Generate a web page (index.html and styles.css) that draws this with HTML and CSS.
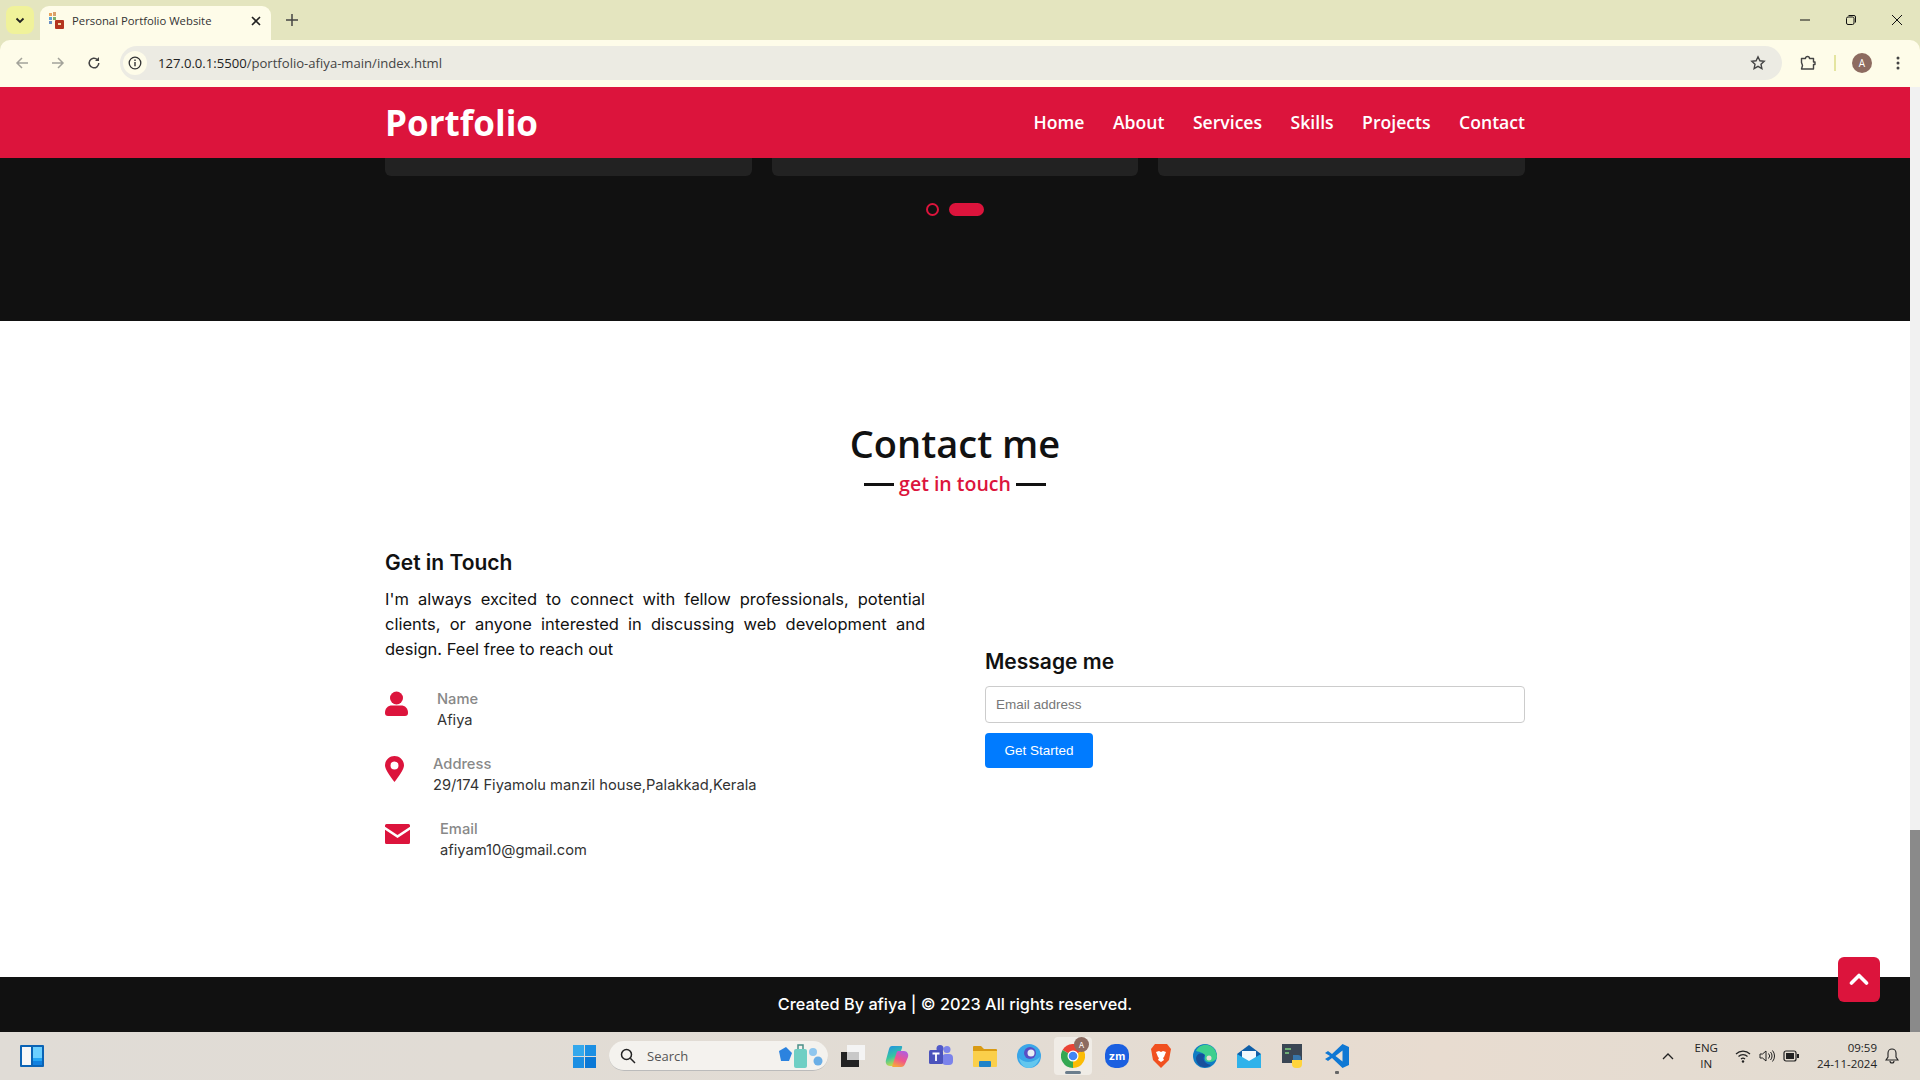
FILE: index.html
```html
<!DOCTYPE html>
<html lang="en">

<head>
    <meta charset="UTF-8">
    <meta name="viewport" content="width=device-width, initial-scale=1.0">
    <title>Personal Portfolio Website</title>
    <link rel="stylesheet" href="styles.css">
</head>

<body>
    <div class="screen">
        <!-- browser tabs -->
        <div class="tabstrip">
            <div class="tab-search">
                <svg width="12" height="12" viewBox="0 0 12 12"><path d="M2.5 4.5 6 8l3.5-3.5" fill="none" stroke="#222" stroke-width="1.8"/></svg>
            </div>
            <div class="tab">
                <svg class="favicon" width="15" height="17" viewBox="0 0 15 17">
                    <rect x="0" y="1" width="3" height="3" fill="#e8a15a"/>
                    <rect x="4" y="0" width="3" height="4" fill="#d9a06b"/>
                    <rect x="0" y="5" width="3" height="3" fill="#5aa0d8"/>
                    <rect x="4" y="5" width="3" height="3" fill="#7fb069"/>
                    <rect x="0" y="9" width="3" height="3" fill="#6a8fc4"/>
                    <rect x="6" y="8" width="9" height="9" rx="1" fill="#b5351f"/>
                    <rect x="9" y="11" width="3" height="2" fill="#f3d9a4"/>
                </svg>
                <span class="tab-title">Personal Portfolio Website</span>
                <svg class="tab-close" width="10" height="10" viewBox="0 0 10 10"><path d="M1 1l8 8M9 1l-8 8" stroke="#222" stroke-width="1.6"/></svg>
            </div>
            <svg class="tab-new" width="12" height="12" viewBox="0 0 12 12"><path d="M6 0v12M0 6h12" stroke="#444" stroke-width="1.5"/></svg>
            <div class="win-controls">
                <svg width="12" height="12" viewBox="0 0 12 12"><path d="M1 6h10" stroke="#111" stroke-width="1"/></svg>
                <svg width="12" height="12" viewBox="0 0 12 12"><rect x="1.5" y="3" width="7.5" height="7.5" rx="1.5" fill="none" stroke="#111"/><path d="M3.5 1.500h5.500a1.500 1.500 0 0 1 1.500 1.500v5.500" fill="none" stroke="#111"/></svg>
                <svg width="12" height="12" viewBox="0 0 12 12"><path d="M1 1l10 10M11 1 1 11" stroke="#111" stroke-width="1"/></svg>
            </div>
        </div>

        <!-- address bar -->
        <div class="toolbar">
            <svg class="nav-btn" width="14" height="14" viewBox="0 0 14 14"><path d="M13 7H2M7 2 2 7l5 5" fill="none" stroke="#a3a39a" stroke-width="1.5"/></svg>
            <svg class="nav-btn" width="14" height="14" viewBox="0 0 14 14"><path d="M1 7h11M7 2l5 5-5 5" fill="none" stroke="#a3a39a" stroke-width="1.5"/></svg>
            <svg class="nav-btn" width="14" height="14" viewBox="0 0 14 14"><path d="M11.8 7A4.800 4.800 0 1 1 10.300 3.500" fill="none" stroke="#444" stroke-width="1.5"/><path d="M12 1v4H8z" fill="#444"/></svg>
            <div class="omnibox">
                <span class="site-info">
                    <svg width="14" height="14" viewBox="0 0 14 14"><circle cx="7" cy="7" r="5.8" fill="none" stroke="#333" stroke-width="1.3"/><path d="M7 6v4.200M7 3.600v1.300" stroke="#333" stroke-width="1.4"/></svg>
                </span>
                <span class="url">127.0.0.1:5500<span class="url-path">/portfolio-afiya-main/index.html</span></span>
                <svg class="star" width="16" height="16" viewBox="0 0 16 16"><path d="M8 1.800l1.900 4 4.300.5-3.200 3 .9 4.300L8 11.400l-3.900 2.200.9-4.300-3.200-3 4.300-.5z" fill="none" stroke="#444" stroke-width="1.4"/></svg>
            </div>
            <svg class="ext" width="16" height="16" viewBox="0 0 16 16"><path d="M1.500 3.500h4a2 2 0 0 1 4 0h4v3.500h1.500v2.500h-1.500v4.500H1.500l1-3.500-1-3z" fill="none" stroke="#444" stroke-width="1.4" stroke-linejoin="round"/></svg>
            <span class="toolbar-sep"></span>
            <span class="avatar">A</span>
            <svg class="kebab" width="4" height="14" viewBox="0 0 4 14"><circle cx="2" cy="2" r="1.5" fill="#444"/><circle cx="2" cy="7" r="1.5" fill="#444"/><circle cx="2" cy="12" r="1.5" fill="#444"/></svg>
        </div>

        <div class="viewport">
            <div class="page">
                <nav class="navbar">
                    <div class="max-width navbar-inner">
                        <a class="logo" href="#">Portfolio</a>
                        <ul class="menu">
                            <li><a href="#">Home</a></li>
                            <li><a href="#">About</a></li>
                            <li><a href="#">Services</a></li>
                            <li><a href="#">Skills</a></li>
                            <li><a href="#">Projects</a></li>
                            <li><a href="#">Contact</a></li>
                        </ul>
                    </div>
                </nav>

                <section class="projects">
                    <div class="max-width cards">
                        <div class="card"></div>
                        <div class="card"></div>
                        <div class="card"></div>
                    </div>
                    <div class="dots">
                        <span class="dot"></span>
                        <span class="dot active"></span>
                    </div>
                </section>

                <section class="contact">
                    <h2 class="title">Contact me</h2>
                    <div class="subtitle"><span class="dash"></span>get in touch<span class="dash"></span></div>
                    <div class="max-width contact-content">
                        <div class="column left">
                            <h3 class="text">Get in Touch</h3>
                            <p>I'm always excited to connect with fellow professionals, potential clients, or anyone interested in discussing web development and design. Feel free to reach out</p>
                            <div class="row row-name">
                                <svg class="icon" width="23" height="26" viewBox="0 0 23 26"><circle cx="11.5" cy="7" r="6.5" fill="#dc143c"/><path d="M0 22c0-5 3-7.500 7-7.500h9c4 0 7 2.500 7 7.500 0 2-1 3-3 3H3c-2 0-3-1-3-3z" fill="#dc143c"/></svg>
                                <div class="info">
                                    <div class="head">Name</div>
                                    <div class="sub-title">Afiya</div>
                                </div>
                            </div>
                            <div class="row row-address">
                                <svg class="icon" width="19" height="26" viewBox="0 0 19 26"><path fill-rule="evenodd" d="M9.500 0C4.300 0 0 4.200 0 9.500c0 3.800 5.500 11.500 9.500 16.500 4-5 9.500-12.700 9.500-16.500C19 4.200 14.700 0 9.500 0zm0 13.500a4 4 0 1 1 0-8 4 4 0 0 1 0 8z" fill="#dc143c"/></svg>
                                <div class="info">
                                    <div class="head">Address</div>
                                    <div class="sub-title">29/174 Fiyamolu manzil house,Palakkad,Kerala</div>
                                </div>
                            </div>
                            <div class="row row-email">
                                <svg class="icon" width="25" height="20" viewBox="0 0 25 20"><path d="M1.500 0h22A1.500 1.500 0 0 1 25 1.500v1.300L12.500 11 0 2.800V1.500A1.500 1.500 0 0 1 1.500 0z" fill="#dc143c"/><path d="M0 5.800 12.500 14 25 5.800v12.700a1.500 1.500 0 0 1-1.500 1.500h-22A1.500 1.500 0 0 1 0 18.500z" fill="#dc143c"/></svg>
                                <div class="info">
                                    <div class="head">Email</div>
                                    <div class="sub-title">afiyam10@gmail.com</div>
                                </div>
                            </div>
                        </div>
                        <div class="column right">
                            <h3 class="text">Message me</h3>
                            <input class="email-input" type="text" placeholder="Email address">
                            <button class="start-btn">Get Started</button>
                        </div>
                    </div>
                </section>

                <footer class="footer">Created By afiya | &copy; 2023 All rights reserved.</footer>
            </div>
            <div class="scrollbar"><div class="thumb"></div></div>
            <a class="scroll-up" href="#">
                <svg width="20" height="14" viewBox="0 0 20 14"><path d="M2.500 11 10 3.500l7.500 7.500" fill="none" stroke="#fff" stroke-width="3.6" stroke-linecap="round" stroke-linejoin="round"/></svg>
            </a>
        </div>

        <!-- windows taskbar -->
        <div class="taskbar">
            <svg class="widgets" width="24" height="22" viewBox="0 0 24 22"><rect width="24" height="22" rx="1" fill="#0a63b5"/><rect x="2" y="2" width="9" height="18" fill="#f7f7f7"/><rect x="13" y="2" width="9" height="11" fill="#6cd0ff"/><rect x="13" y="13" width="9" height="3" fill="#22a5f5"/><rect x="13" y="16" width="9" height="4" fill="#0f80e0"/></svg>
            <div class="task-center">
                <svg class="start-icon" width="23" height="23" viewBox="0 0 23 23"><rect width="11" height="11" fill="#34a8ec"/><rect x="12" width="11" height="11" fill="#1c8fe3"/><rect y="12" width="11" height="11" fill="#1c8fe3"/><rect x="12" y="12" width="11" height="11" fill="#0a78d6"/></svg>
                <div class="searchbox">
                    <svg width="16" height="16" viewBox="0 0 16 16"><circle cx="6.500" cy="6.500" r="5" fill="none" stroke="#222" stroke-width="1.5"/><path d="M10.300 10.300 15 15" stroke="#222" stroke-width="1.5"/></svg>
                    <span class="search-text">Search</span>
                    <svg class="search-art" width="46" height="26" viewBox="0 0 46 26"><path d="M1 8 8 4l6 6-3 8-8 0z" fill="#2c83df"/><rect x="16" y="6" width="13" height="19" rx="2" fill="#6fcfc4"/><path d="M20 6V2h5v4" fill="none" stroke="#4a8f88" stroke-width="1.5"/><circle cx="35" cy="9" r="4" fill="#8fc6ee"/><circle cx="40" cy="18" r="4.500" fill="#6aaee6"/></svg>
                </div>
                <div class="apps">
                    <div class="app">
                        <svg width="24" height="22" viewBox="0 0 24 22"><rect x="6" width="18" height="15" fill="#f4f4f4"/><rect y="7" width="18" height="15" fill="#222"/><rect x="6" y="7" width="12" height="8" fill="#c8c8c8"/></svg>
                    </div>
                    <div class="app">
                        <svg width="24" height="24" viewBox="0 0 24 24">
                            <defs>
                                <linearGradient id="copilotA" x1="0" y1="0" x2="0.3" y2="1"><stop offset="0" stop-color="#1f8fe8"/><stop offset="0.6" stop-color="#37c6a0"/><stop offset="1" stop-color="#c5d84a"/></linearGradient>
                                <linearGradient id="copilotB" x1="0.7" y1="0" x2="0.3" y2="1"><stop offset="0" stop-color="#b05ce0"/><stop offset="0.55" stop-color="#f0558c"/><stop offset="1" stop-color="#f6a63c"/></linearGradient>
                            </defs>
                            <path d="M7 2h9c1 0 1.500.5 1 2l-5 14c-.5 2-2 4-4 4H5c-3 0-5-3-4-6L4 5c.5-2 1.500-3 3-3z" fill="url(#copilotA)"/>
                            <path d="M13 7h6c3 0 5 3 4 6l-3 7c-.7 2-2 3-4 3H8c-1 0-1-1-.5-2l4-12c.3-1 .7-2 1.500-2z" fill="url(#copilotB)"/>
                        </svg>
                    </div>
                    <div class="app">
                        <svg width="24" height="22" viewBox="0 0 24 22"><circle cx="18" cy="4.500" r="3.500" fill="#7b83eb"/><rect x="13" y="9" width="11" height="11" rx="4" fill="#7b83eb"/><circle cx="11" cy="3.500" r="3.500" fill="#5059c9"/><rect y="5" width="14" height="14" rx="1.5" fill="#4b53bc"/><path d="M3.500 8.500h7M7 8.500v7.500" stroke="#fff" stroke-width="1.8"/></svg>
                    </div>
                    <div class="app">
                        <svg width="24" height="22" viewBox="0 0 24 22"><path d="M0 2a1 1 0 0 1 1-1h7l3 3h12a1 1 0 0 1 1 1v3H0z" fill="#d99a12"/><path d="M0 6h24v15a1 1 0 0 1-1 1H1a1 1 0 0 1-1-1z" fill="#fbcf4a"/><rect x="6" y="16" width="12" height="6" rx="1" fill="#1f83c9"/></svg>
                    </div>
                    <div class="app">
                        <svg width="24" height="24" viewBox="0 0 24 24"><circle cx="12" cy="12" r="12" fill="#3aa6e8"/><circle cx="13" cy="9" r="6" fill="#5a4fc4"/><circle cx="14" cy="9" r="3.5" fill="#e8eef5"/><path d="M2 14c6 6 14 5 21-1-2 7-7 11-11 11C7 24 3 20 2 14z" fill="#63c7ee"/></svg>
                    </div>
                    <div class="app app-active">
                        <svg width="24" height="24" viewBox="0 0 24 24"><path d="M22.400 6A12 12 0 0 0 1.600 6L12 12z" fill="#ea4335"/><path d="M1.600 6A12 12 0 0 0 12 24V12z" fill="#34a853"/><path d="M12 24A12 12 0 0 0 22.400 6L12 12z" fill="#fbbc05"/><circle cx="12" cy="12" r="5.500" fill="#fff"/><circle cx="12" cy="12" r="4.300" fill="#4285f4"/></svg>
                        <span class="task-badge">A</span>
                        <span class="task-pill"></span>
                    </div>
                    <div class="app">
                        <svg width="24" height="24" viewBox="0 0 24 24"><rect width="24" height="24" rx="10" fill="#1a5fe0"/><text x="12" y="16" class="zm">zm</text></svg>
                    </div>
                    <div class="app">
                        <svg width="20" height="24" viewBox="0 0 20 24"><path d="M4 0h12l4 5-2 11-8 8-8-8L0 5z" fill="#f1501f"/><path d="M5 8l3-1 2 1 2-1 3 1-2 5-1 1 1 2-3 2-3-2 1-2-1-1z" fill="#fff"/></svg>
                    </div>
                    <div class="app">
                        <svg width="24" height="24" viewBox="0 0 24 24"><circle cx="12" cy="12" r="12" fill="#0f7cc4"/><path d="M3 7C7-2 22-2 24 12c0 4-4 6-8 6-3 0-5-2-4-5 1-3-4-5-9-6z" fill="#3ecf8e"/><path d="M3 15C3 10 8 8 12 11c-3 3-1 9 6 10-7 5-14 1-15-6z" fill="#17509c"/><circle cx="16" cy="14" r="2.500" fill="#e6ddd2"/></svg>
                    </div>
                    <div class="app">
                        <svg width="24" height="23" viewBox="0 0 24 23"><path d="M12 0 24 9v14H0V9z" fill="#0f5fa8"/><path d="M5 6h14v9l-7 3-7-3z" fill="#f2f8fc"/><path d="M0 9l12 7 12-7v14H0z" fill="#2fb2ea"/></svg>
                    </div>
                    <div class="app">
                        <svg width="24" height="24" viewBox="0 0 24 24"><rect x="1" width="20" height="19" fill="#3a4654"/><path d="M4 5h6M4 9h4" stroke="#7fd17f" stroke-width="1.5"/><path d="M12 11h5a3 3 0 0 1 3 3v3h-8z" fill="#3776ab"/><path d="M11 16h10v4a4 4 0 0 1-4 4h-2a4 4 0 0 1-4-4z" fill="#ffd43b"/></svg>
                    </div>
                    <div class="app app-run">
                        <svg width="24" height="24" viewBox="0 0 24 24"><path d="M17.500 0 24 3v18l-6.500 3L7 14l-4 3-3-2 5-3-5-3 3-2 4 3z" fill="#0f78d4"/><path d="M17.500 6.500v11L10.500 12z" fill="#e8e0d6"/></svg>
                        <span class="run-dot"></span>
                    </div>
                </div>
            </div>
            <div class="tray">
                <svg width="12" height="8" viewBox="0 0 12 8"><path d="M1 7l5-5 5 5" fill="none" stroke="#222" stroke-width="1.3"/></svg>
                <div class="lang">ENG<br>IN</div>
                <svg width="16" height="14" viewBox="0 0 16 14"><path d="M1 5a10 10 0 0 1 14 0M3.500 7.500a6.500 6.500 0 0 1 9 0M6 10a3 3 0 0 1 4 0" fill="none" stroke="#222" stroke-width="1.2"/><circle cx="8" cy="12.500" r="1.2" fill="#222"/></svg>
                <svg width="16" height="14" viewBox="0 0 16 14"><path d="M1 5h2.500L7 2v10L3.500 9H1z" fill="none" stroke="#222"/><path d="M9.500 4.500a3.500 3.500 0 0 1 0 5M11.500 3a6 6 0 0 1 0 8M13.500 1.500a8.500 8.500 0 0 1 0 11" fill="none" stroke="#222"/></svg>
                <svg width="16" height="12" viewBox="0 0 16 12"><rect x="1" y="1" width="12" height="10" rx="2" fill="none" stroke="#222" stroke-width="1.2"/><rect x="3" y="3" width="8" height="6" fill="#222"/><rect x="14" y="4" width="2" height="4" fill="#222"/></svg>
                <div class="clock">09:59<br>24-11-2024</div>
                <svg width="14" height="16" viewBox="0 0 14 16"><path d="M7 1a4 4 0 0 1 4 4v4l2 3H1l2-3V5a4 4 0 0 1 4-4zM5 13a2 2 0 0 0 4 0" fill="none" stroke="#222" stroke-width="1.1"/></svg>
            </div>
        </div>
    </div>
</body>

</html>
```

FILE: styles.css
```css
* {
    box-sizing: border-box;
    margin: 0;
    padding: 0;
}

body {
    font-family: "Inter", "Liberation Sans", sans-serif;
    overflow: hidden;
}

a {
    color: inherit;
    text-decoration: none;
}

.screen {
    width: 1920px;
    height: 1080px;
    display: flex;
    flex-direction: column;
    background: #e4e5bf;
}

/* browser chrome */
.tabstrip {
    height: 40px;
    display: flex;
    align-items: center;
    padding-left: 6px;
    flex-shrink: 0;
}

.tab-search {
    width: 28px;
    height: 28px;
    background: #f0f29a;
    border-radius: 8px;
    display: flex;
    align-items: center;
    justify-content: center;
}

.tab {
    width: 231px;
    height: 34px;
    margin: 6px 0 0 6px;
    background: #fefce9;
    border-radius: 9px 9px 0 0;
    display: flex;
    align-items: center;
    padding: 0 10px 5px 9px;
    font-family: "Open Sans", sans-serif;
    font-size: 11.3px;
    color: #333;
}

.favicon {
    flex-shrink: 0;
}

.tab-title {
    margin-left: 8px;
    flex: 1;
    white-space: nowrap;
}

.tab-new {
    margin-left: 15px;
}

.win-controls {
    margin-left: auto;
    display: flex;
    gap: 34px;
    padding-right: 17px;
}

.toolbar {
    height: 47px;
    background: #fefce9;
    border-radius: 10px 10px 0 0;
    display: flex;
    align-items: center;
    padding: 0 0 1px 15px;
    flex-shrink: 0;
}

.nav-btn {
    margin-right: 22px;
}

.omnibox {
    margin-left: -3px;
    width: 1662px;
    height: 34px;
    background: #ecebe3;
    border-radius: 17px;
    display: flex;
    align-items: center;
    padding: 0 16px 0 3px;
}

.site-info {
    width: 24px;
    height: 24px;
    border-radius: 50%;
    background: #fefce9;
    display: flex;
    align-items: center;
    justify-content: center;
}

.url {
    margin-left: 11px;
    font-family: "Open Sans", sans-serif;
    font-size: 13.1px;
    color: #222;
    flex: 1;
}

.url-path {
    color: #444;
}

.ext {
    margin-left: 18px;
}

.toolbar-sep {
    width: 2px;
    height: 16px;
    background: #e4e5a0;
    margin-left: 18px;
}

.avatar {
    width: 20px;
    height: 20px;
    margin-left: 16px;
    border-radius: 50%;
    background: #8d6b60;
    color: #fff;
    font-size: 10px;
    font-family: "Open Sans", sans-serif;
    display: flex;
    align-items: center;
    justify-content: center;
}

.kebab {
    margin-left: 24px;
}

.viewport {
    height: 945px;
    display: flex;
    position: relative;
}

.page {
    flex: 1;
    display: flex;
    flex-direction: column;
    min-width: 0;
}

.scrollbar {
    width: 10px;
    background: #f1f1f1;
    display: flex;
    align-items: flex-end;
}

.thumb {
    width: 100%;
    height: 202px;
    background: #8a8a8a;
}

.max-width {
    width: 1140px;
    margin: 0 auto;
}

/* navbar */
.navbar {
    height: 71px;
    background: crimson;
    color: #fff;
}

.navbar-inner {
    height: 100%;
    display: flex;
    align-items: center;
    justify-content: space-between;
}

.logo {
    font-family: "Open Sans", sans-serif;
    font-size: 35px;
    font-weight: 700;
}

.menu {
    list-style: none;
    display: flex;
    gap: 28.5px;
    padding-bottom: 1px;
    font-family: "Open Sans", sans-serif;
    font-size: 17.6px;
    font-weight: 600;
}

/* dark slider section */
.projects {
    height: 163px;
    background: #111;
}

.cards {
    display: flex;
    gap: 20px;
}

.card {
    flex: 1;
    height: 18px;
    background: #222;
    border-radius: 0 0 6px 6px;
}

.dots {
    margin-top: 27px;
    display: flex;
    justify-content: center;
    align-items: center;
    gap: 10px;
}

.dot {
    width: 13px;
    height: 13px;
    border: 2px solid crimson;
    border-radius: 50%;
}

.dot.active {
    width: 35px;
    background: crimson;
    border-radius: 7px;
}

/* contact */
.contact {
    height: 656px;
    background: #fff;
    padding-top: 98px;
}

.title {
    font-family: "Open Sans", sans-serif;
    font-size: 38px;
    font-weight: 600;
    line-height: 48px;
    text-align: center;
    color: #111;
}

.subtitle {
    margin-top: 2px;
    display: flex;
    justify-content: center;
    align-items: center;
    gap: 5px;
    font-family: "Open Sans", sans-serif;
    font-size: 19.5px;
    font-weight: 600;
    line-height: 30px;
    color: crimson;
}

.dash {
    width: 30px;
    height: 3px;
    background: #111;
}

.contact-content {
    display: flex;
    gap: 60px;
    align-items: flex-start;
    margin-top: 48px;
}

.column {
    flex: 1;
}

.text {
    font-size: 21px;
    font-weight: 600;
    line-height: 32px;
    color: #111;
}

.column p {
    margin-top: 8px;
    font-size: 16.5px;
    line-height: 25px;
    text-align: justify;
    color: #111;
}

.row {
    display: flex;
    align-items: flex-start;
    margin-top: 27px;
    height: 41px;
}

.row + .row {
    margin-top: 24px;
}

.icon {
    flex-shrink: 0;
    margin-top: 2px;
}

.info {
    font-size: 14.7px;
    line-height: 21px;
}

.row-name .info {
    margin-left: 29px;
}

.row-address .info {
    margin-left: 29px;
}

.row-email .info {
    margin-left: 30px;
}

.row-email .icon {
    margin-top: 5px;
}

.head {
    font-weight: 500;
    color: #888;
}

.sub-title {
    color: #333;
}

.right {
    padding-top: 99px;
}

.email-input {
    display: block;
    width: 100%;
    height: 37px;
    margin-top: 8px;
    padding: 0 10px;
    border: 1px solid #ccc;
    border-radius: 4px;
    font-family: "Liberation Sans", sans-serif;
    font-size: 13.5px;
    background: #fff;
}

.email-input::placeholder {
    color: #777;
}

.start-btn {
    display: block;
    width: 108px;
    height: 35px;
    margin-top: 10px;
    border: 0;
    border-radius: 4px;
    background: #007bff;
    color: #fff;
    font-family: "Liberation Sans", sans-serif;
    font-size: 13.5px;
}

.footer {
    flex: 1;
    padding-bottom: 2px;
    background: #111;
    color: #fff;
    display: flex;
    align-items: center;
    justify-content: center;
    font-size: 16.3px;
    font-weight: 500;
}

.scroll-up {
    position: absolute;
    right: 40px;
    bottom: 30px;
    width: 42px;
    height: 45px;
    padding-bottom: 2px;
    background: crimson;
    border-radius: 6px;
    display: flex;
    align-items: center;
    justify-content: center;
}

/* taskbar */
.taskbar {
    flex: 1;
    background: linear-gradient(90deg, #e0dcd6 0%, #e2dcd4 50%, #e8dcd0 75%, #e2dcd2 100%);
    display: flex;
    align-items: center;
    padding: 0 21px 0 20px;
}

.task-center {
    margin-left: 529px;
    display: flex;
    align-items: center;
}

.start-icon {
    margin-right: 13px;
}

.searchbox {
    width: 219px;
    height: 30px;
    background: #f4f2ee;
    border-radius: 15px;
    border-bottom: 1px solid #bbb;
    display: flex;
    align-items: center;
    padding: 0 4px 0 11px;
    font-family: "Open Sans", sans-serif;
    font-size: 13px;
    color: #555;
}

.search-text {
    margin-left: 11px;
    flex: 1;
}

.apps {
    margin-left: 3px;
    display: grid;
    grid-auto-flow: column;
    grid-auto-columns: 44px;
    justify-items: center;
    align-items: center;
}

.app {
    height: 24px;
    display: flex;
    align-items: center;
    justify-content: center;
    position: relative;
}

.app-active::before {
    content: "";
    position: absolute;
    left: -7px;
    right: -7px;
    top: -7px;
    bottom: -7px;
    background: #f0ece6;
    border-radius: 4px;
}

.app-active svg {
    position: relative;
}

.task-badge {
    position: absolute;
    top: -7px;
    right: -4px;
    width: 15px;
    height: 15px;
    border-radius: 50%;
    background: #8d6b60;
    color: #fff;
    font-size: 8px;
    display: flex;
    align-items: center;
    justify-content: center;
}

.task-pill {
    position: absolute;
    left: 4px;
    bottom: -6px;
    width: 16px;
    height: 3px;
    border-radius: 2px;
    background: #6b7d8c;
}

.zm {
    font-size: 11px;
    font-weight: 700;
    fill: #fff;
    text-anchor: middle;
}

.run-dot {
    position: absolute;
    left: 10px;
    bottom: -6px;
    width: 4px;
    height: 3px;
    background: #666;
    border-radius: 1px;
}

.tray {
    margin-left: auto;
    display: flex;
    align-items: center;
    gap: 8px;
    font-family: "Open Sans", sans-serif;
    font-size: 11.5px;
    color: #222;
}

.lang {
    margin: 0 9px 0 13px;
    text-align: center;
    line-height: 16px;
}

.clock {
    margin-left: 10px;
    text-align: right;
    line-height: 16px;
}
```
